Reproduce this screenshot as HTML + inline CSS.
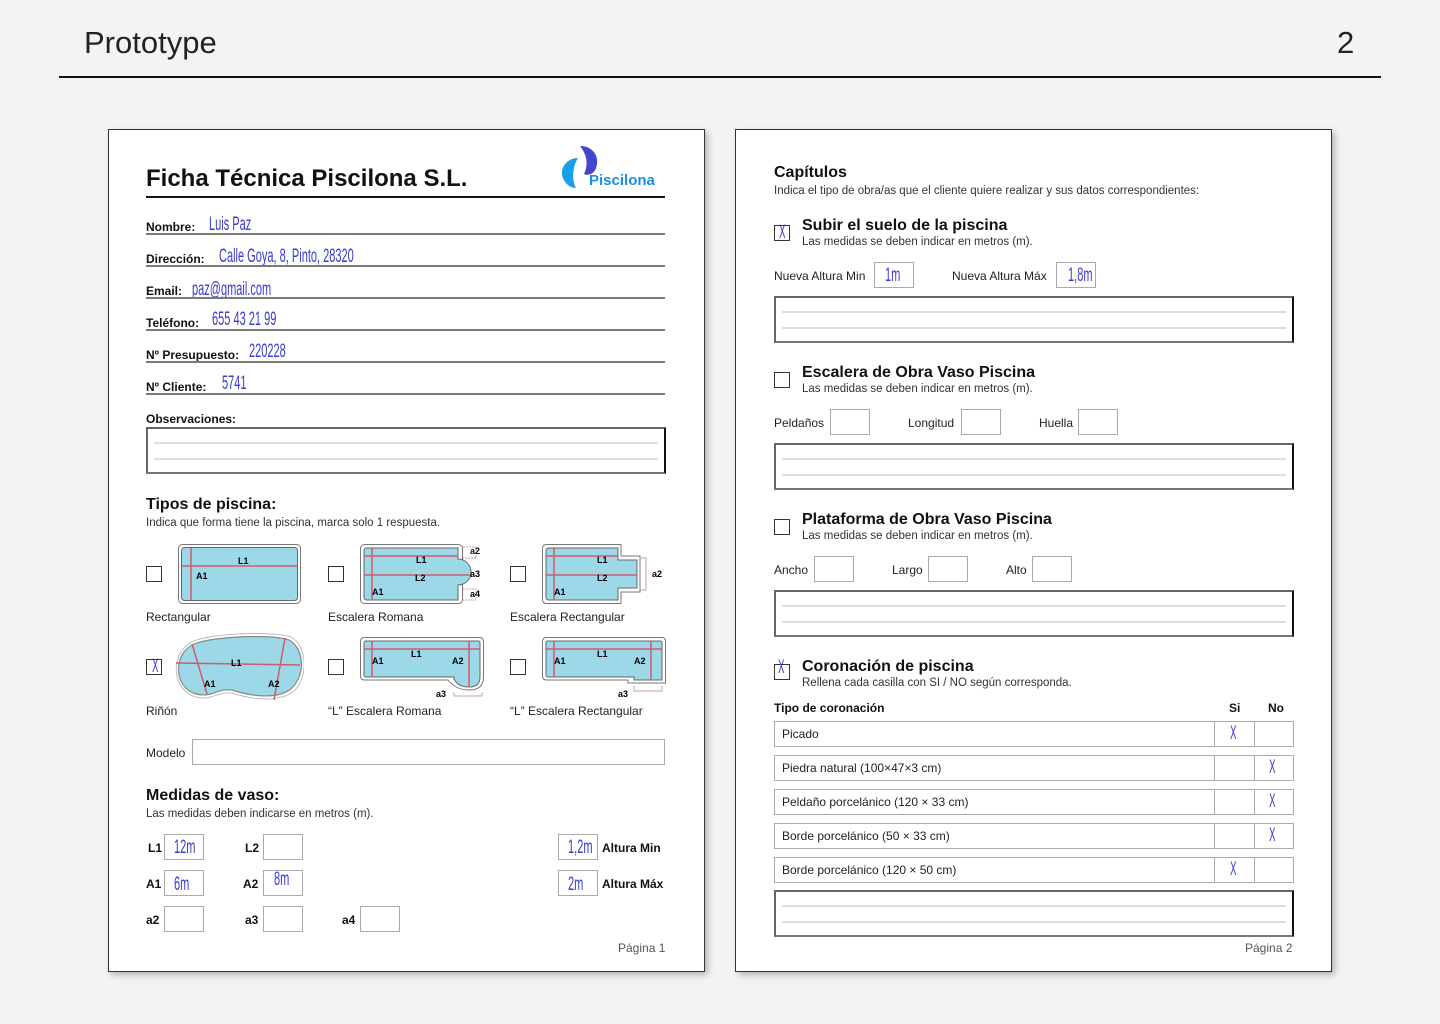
<!DOCTYPE html>
<html><head><meta charset="utf-8"><style>
*{margin:0;padding:0;box-sizing:border-box}
body{width:1440px;height:1024px;background:#f3f3f3;position:relative;font-family:"Liberation Sans",sans-serif;color:#111;overflow:hidden}
.a{position:absolute;white-space:nowrap}
.pg{position:absolute;background:#fff;border:1px solid #333;box-shadow:3px 3px 6px rgba(0,0,0,.25)}
.lb{font-size:12px;font-weight:bold;line-height:14px}
.ln{position:absolute;height:2px;background:#7a7a7a}
.hw{position:absolute;white-space:nowrap;font-family:"Liberation Sans Narrow","Liberation Sans",sans-serif;color:#3b3bd0;font-size:19px;transform:scaleX(.58);transform-origin:left center;line-height:18px}
.box{position:absolute;border:2px solid #666;border-right-color:#111;border-bottom-color:#777}
.box i{position:absolute;left:6px;right:6px;height:2px;background:#ddd}
.f{position:absolute;border:1px solid #aaa;background:#fff}
.cb{position:absolute;width:16px;height:16px;border:1.5px solid #333;background:#fff}
.t16{font-size:16px;font-weight:bold;line-height:20px}
.s11{font-size:11.5px;color:#333;line-height:14px}
.n12{font-size:12px;line-height:14px;color:#222}
.x{position:absolute;color:#3b3bd0;font-family:"Liberation Sans Narrow","Liberation Sans",sans-serif;font-size:19px;line-height:18px;transform:scaleX(.5)}
</style></head><body>
<div class="a" style="left:84px;top:24px;font-size:31px;line-height:38px;color:#222">Prototype</div>
<div class="a" style="left:1337px;top:24px;font-size:31px;line-height:38px;color:#222">2</div>
<div class="a" style="left:59px;top:76px;width:1322px;height:2px;background:#111"></div>

<!-- PAGE 1 -->
<div class="pg" style="left:108px;top:129px;width:597px;height:843px"></div>
<div class="a" style="left:146px;top:165px;font-size:24px;font-weight:bold;line-height:28px">Ficha Técnica Piscilona S.L.</div>
<div class="a" style="left:146px;top:196px;width:519px;height:2px;background:#111"></div>
<svg class="a" style="left:558px;top:144px" width="110" height="46" viewBox="0 0 110 46">
<path d="M22 2 C36 2 42 14 38 24 C36 30 30 32 26 30 C30 22 30 12 22 2Z" fill="#4444cc"/>
<path d="M20 14 C8 14 0 26 6 36 C9 42 14 44 18 44 C14 36 14 24 20 14Z" fill="#1aa0e6"/>
<text x="31" y="41" font-family="Liberation Sans" font-weight="bold" font-size="15" fill="#1a8fe0">Piscilona</text>
</svg>

<div class="a lb" style="left:146px;top:220px">Nombre:</div><div class="hw" style="left:209px;top:216px">Luis Paz</div><div class="ln" style="left:146px;top:233px;width:519px"></div>
<div class="a lb" style="left:146px;top:252px">Dirección:</div><div class="hw" style="left:219px;top:248px">Calle Goya, 8, Pinto, 28320</div><div class="ln" style="left:146px;top:265px;width:519px"></div>
<div class="a lb" style="left:146px;top:284px">Email:</div><div class="hw" style="left:192px;top:281px">paz@gmail.com</div><div class="ln" style="left:146px;top:297px;width:519px"></div>
<div class="a lb" style="left:146px;top:316px">Teléfono:</div><div class="hw" style="left:212px;top:311px">655 43 21 99</div><div class="ln" style="left:146px;top:329px;width:519px"></div>
<div class="a lb" style="left:146px;top:348px">Nº Presupuesto:</div><div class="hw" style="left:249px;top:343px">220228</div><div class="ln" style="left:146px;top:361px;width:519px"></div>
<div class="a lb" style="left:146px;top:380px">Nº Cliente:</div><div class="hw" style="left:222px;top:375px">5741</div><div class="ln" style="left:146px;top:393px;width:519px"></div>
<div class="a lb" style="left:146px;top:412px">Observaciones:</div>
<div class="box" style="left:146px;top:427px;width:520px;height:47px"><i style="top:13px"></i><i style="top:29px"></i></div>

<div class="a t16" style="left:146px;top:495px">Tipos de piscina:</div>
<div class="a s11" style="left:146px;top:516px">Indica que forma tiene la piscina, marca solo 1 respuesta.</div>

<div class="cb" style="left:146px;top:566px"></div>
<div class="cb" style="left:328px;top:566px"></div>
<div class="cb" style="left:510px;top:566px"></div>
<div class="cb" style="left:146px;top:659px"></div><div class="x" style="left:149px;top:658px">X</div>
<div class="cb" style="left:328px;top:659px"></div>
<div class="cb" style="left:510px;top:659px"></div>

<svg class="a" style="left:176px;top:542px" width="130" height="64" font-family="Liberation Sans" font-weight="bold" font-size="9">
<rect x="2.5" y="2.5" width="122" height="59" rx="4" fill="#fff" stroke="#777"/>
<rect x="5.5" y="5.5" width="116" height="53" rx="3" fill="#9dd8e8" stroke="#666"/>
<line x1="5" y1="24" x2="122" y2="24" stroke="#d05a6a" stroke-width="1.5"/><line x1="15" y1="6" x2="15" y2="58" stroke="#d05a6a" stroke-width="1.5"/>
<text x="62" y="22">L1</text><text x="20" y="37">A1</text></svg>

<svg class="a" style="left:358px;top:542px" width="130" height="64" font-family="Liberation Sans" font-weight="bold" font-size="9">
<rect x="2.5" y="2.5" width="102" height="59" rx="4" fill="#fff" stroke="#777"/>
<path d="M6 9 Q6 6 9 6 H100 V17 A13 13 0 0 1 100 43 V58 H9 Q6 58 6 55Z" fill="#9dd8e8" stroke="#666"/>
<line x1="6" y1="14" x2="100" y2="14" stroke="#d05a6a" stroke-width="1.5"/><line x1="6" y1="33" x2="112" y2="33" stroke="#d05a6a" stroke-width="1.5"/><line x1="14" y1="6" x2="14" y2="58" stroke="#d05a6a" stroke-width="1.5"/>
<path d="M105 5 H118 V16 H105 M105 47 H118 V58 H105" fill="none" stroke="#c9a0a8" stroke-dasharray="2 1"/>
<text x="58" y="21">L1</text><text x="57" y="39">L2</text><text x="14" y="53">A1</text>
<text x="112" y="12" fill="#111">a2</text><text x="112" y="35">a3</text><text x="112" y="55">a4</text></svg>

<svg class="a" style="left:540px;top:542px" width="130" height="64" font-family="Liberation Sans" font-weight="bold" font-size="9">
<path d="M2.5 6.5 Q2.5 2.5 6.5 2.5 H81 V14 H100 V50 H81 V61.5 H6.5 Q2.5 61.5 2.5 57.5Z" fill="#fff" stroke="#777"/>
<path d="M6 9 Q6 6 9 6 H78 V18 H97 V46 H78 V58 H9 Q6 58 6 55Z" fill="#9dd8e8" stroke="#666"/>
<line x1="6" y1="14" x2="78" y2="14" stroke="#d05a6a" stroke-width="1.5"/><line x1="6" y1="33" x2="97" y2="33" stroke="#d05a6a" stroke-width="1.5"/><line x1="14" y1="6" x2="14" y2="58" stroke="#d05a6a" stroke-width="1.5"/>
<path d="M100 16 H106 V48 H100" fill="none" stroke="#c9a0a8"/>
<text x="57" y="21">L1</text><text x="57" y="39">L2</text><text x="14" y="53">A1</text><text x="112" y="35">a2</text></svg>

<svg class="a" style="left:174px;top:632px" width="130" height="72" font-family="Liberation Sans" font-weight="bold" font-size="9">
<path d="M20 12 C40 4 100 2 115 8 C130 16 132 42 118 56 C102 70 70 62 58 58 C44 56 38 66 22 62 C0 56 -2 22 20 12Z" fill="#9dd8e8" stroke="#888" stroke-width="1.2"/>
<path d="M20 9 C40 1 100 -1 117 5 C133 14 135 44 120 59 C102 73 70 65 58 61 C44 59 38 69 22 65 C-3 58 -5 20 20 9Z" fill="none" stroke="#bbb"/>
<line x1="2" y1="31" x2="126" y2="33" stroke="#d05a6a" stroke-width="1.5"/><line x1="18" y1="12" x2="33" y2="62" stroke="#d05a6a" stroke-width="1.5"/><line x1="111" y1="6" x2="100" y2="68" stroke="#d05a6a" stroke-width="1.5"/>
<text x="57" y="34">L1</text><text x="30" y="55">A1</text><text x="94" y="55">A2</text></svg>

<svg class="a" style="left:358px;top:635px" width="130" height="66" font-family="Liberation Sans" font-weight="bold" font-size="9">
<path d="M2.5 6.5 Q2.5 2.5 6.5 2.5 H122 Q125.5 2.5 125.5 6.5 V42 Q125.5 55 111 55 Q98 55 90 45 H6.5 Q2.5 45 2.5 41Z" fill="#fff" stroke="#777"/>
<path d="M6 8 Q6 6 8 6 H120 Q122 6 122 8 V42 Q122 52 111 52 Q100 52 96 44 V42 H8 Q6 42 6 40Z" fill="#9dd8e8" stroke="#666"/>
<line x1="6" y1="14" x2="122" y2="14" stroke="#d05a6a" stroke-width="1.5"/><line x1="14" y1="6" x2="14" y2="42" stroke="#d05a6a" stroke-width="1.5"/><line x1="111" y1="6" x2="111" y2="52" stroke="#d05a6a" stroke-width="1.5"/>
<path d="M96 57 V61 H124 V57" fill="none" stroke="#c9a0a8"/>
<text x="53" y="22">L1</text><text x="14" y="29">A1</text><text x="94" y="29">A2</text><text x="78" y="62">a3</text></svg>

<svg class="a" style="left:540px;top:635px" width="130" height="66" font-family="Liberation Sans" font-weight="bold" font-size="9">
<path d="M2.5 6.5 Q2.5 2.5 6.5 2.5 H122 Q125.5 2.5 125.5 6.5 V48 H88 V45 H6.5 Q2.5 45 2.5 41Z" fill="#fff" stroke="#777"/>
<path d="M6 8 Q6 6 8 6 H120 Q122 6 122 8 V45 H94 V42 H8 Q6 42 6 40Z" fill="#9dd8e8" stroke="#666"/>
<line x1="6" y1="14" x2="122" y2="14" stroke="#d05a6a" stroke-width="1.5"/><line x1="14" y1="6" x2="14" y2="42" stroke="#d05a6a" stroke-width="1.5"/><line x1="111" y1="6" x2="111" y2="45" stroke="#d05a6a" stroke-width="1.5"/>
<path d="M94 51 V56 H122 V51" fill="none" stroke="#c9a0a8"/>
<text x="57" y="22">L1</text><text x="14" y="29">A1</text><text x="94" y="29">A2</text><text x="78" y="62">a3</text></svg>

<div class="a n12" style="left:146px;top:610px">Rectangular</div>
<div class="a n12" style="left:328px;top:610px">Escalera Romana</div>
<div class="a n12" style="left:510px;top:610px">Escalera Rectangular</div>
<div class="a n12" style="left:146px;top:704px">Riñón</div>
<div class="a n12" style="left:328px;top:704px">“L” Escalera Romana</div>
<div class="a n12" style="left:510px;top:704px">“L”  Escalera Rectangular</div>

<div class="a n12" style="left:146px;top:746px">Modelo</div>
<div class="f" style="left:192px;top:739px;width:473px;height:26px"></div>

<div class="a t16" style="left:146px;top:786px">Medidas de vaso:</div>
<div class="a s11" style="left:146px;top:807px">Las medidas deben indicarse en metros (m).</div>

<div class="a lb" style="left:148px;top:841px">L1</div><div class="f" style="left:164px;top:834px;width:40px;height:26px"></div><div class="hw" style="left:174px;top:839px">12m</div>
<div class="a lb" style="left:245px;top:841px">L2</div><div class="f" style="left:263px;top:834px;width:40px;height:26px"></div>
<div class="a lb" style="left:146px;top:877px">A1</div><div class="f" style="left:164px;top:870px;width:40px;height:26px"></div><div class="hw" style="left:174px;top:876px">6m</div>
<div class="a lb" style="left:243px;top:877px">A2</div><div class="f" style="left:263px;top:870px;width:40px;height:26px"></div><div class="hw" style="left:274px;top:871px">8m</div>
<div class="a lb" style="left:146px;top:913px">a2</div><div class="f" style="left:164px;top:906px;width:40px;height:26px"></div>
<div class="a lb" style="left:245px;top:913px">a3</div><div class="f" style="left:263px;top:906px;width:40px;height:26px"></div>
<div class="a lb" style="left:342px;top:913px">a4</div><div class="f" style="left:360px;top:906px;width:40px;height:26px"></div>
<div class="f" style="left:558px;top:834px;width:40px;height:26px"></div><div class="hw" style="left:568px;top:839px">1,2m</div><div class="a lb" style="left:602px;top:841px">Altura Min</div>
<div class="f" style="left:558px;top:870px;width:40px;height:26px"></div><div class="hw" style="left:568px;top:876px">2m</div><div class="a lb" style="left:602px;top:877px">Altura Máx</div>
<div class="a n12" style="left:618px;top:941px;color:#555">Página 1</div>

<!-- PAGE 2 -->
<div class="pg" style="left:735px;top:129px;width:597px;height:843px"></div>
<div class="a t16" style="left:774px;top:163px">Capítulos</div>
<div class="a s11" style="left:774px;top:184px">Indica el tipo de obra/as que el cliente quiere realizar y sus datos correspondientes:</div>

<div class="cb" style="left:774px;top:225px"></div><div class="x" style="left:776px;top:224px">X</div>
<div class="a t16" style="left:802px;top:216px">Subir el suelo de la piscina</div>
<div class="a s11" style="left:802px;top:235px">Las medidas se deben indicar en metros (m).</div>
<div class="a n12" style="left:774px;top:269px">Nueva Altura Min</div><div class="f" style="left:874px;top:262px;width:40px;height:26px"></div><div class="hw" style="left:885px;top:267px">1m</div>
<div class="a n12" style="left:952px;top:269px">Nueva Altura Máx</div><div class="f" style="left:1056px;top:262px;width:40px;height:26px"></div><div class="hw" style="left:1068px;top:267px">1,8m</div>
<div class="box" style="left:774px;top:296px;width:520px;height:47px"><i style="top:13px"></i><i style="top:29px"></i></div>

<div class="cb" style="left:774px;top:372px"></div>
<div class="a t16" style="left:802px;top:363px">Escalera de Obra Vaso Piscina</div>
<div class="a s11" style="left:802px;top:382px">Las medidas se deben indicar en metros (m).</div>
<div class="a n12" style="left:774px;top:416px">Peldaños</div><div class="f" style="left:830px;top:409px;width:40px;height:26px"></div>
<div class="a n12" style="left:908px;top:416px">Longitud</div><div class="f" style="left:961px;top:409px;width:40px;height:26px"></div>
<div class="a n12" style="left:1039px;top:416px">Huella</div><div class="f" style="left:1078px;top:409px;width:40px;height:26px"></div>
<div class="box" style="left:774px;top:443px;width:520px;height:47px"><i style="top:13px"></i><i style="top:29px"></i></div>

<div class="cb" style="left:774px;top:519px"></div>
<div class="a t16" style="left:802px;top:510px">Plataforma de Obra Vaso Piscina</div>
<div class="a s11" style="left:802px;top:529px">Las medidas se deben indicar en metros (m).</div>
<div class="a n12" style="left:774px;top:563px">Ancho</div><div class="f" style="left:814px;top:556px;width:40px;height:26px"></div>
<div class="a n12" style="left:892px;top:563px">Largo</div><div class="f" style="left:928px;top:556px;width:40px;height:26px"></div>
<div class="a n12" style="left:1006px;top:563px">Alto</div><div class="f" style="left:1032px;top:556px;width:40px;height:26px"></div>
<div class="box" style="left:774px;top:590px;width:520px;height:47px"><i style="top:13px"></i><i style="top:29px"></i></div>

<div class="cb" style="left:774px;top:664px"></div><div class="x" style="left:775px;top:659px">X</div>
<div class="a t16" style="left:802px;top:657px">Coronación de piscina</div>
<div class="a s11" style="left:802px;top:676px">Rellena cada casilla con SI / NO según corresponda.</div>
<div class="a lb" style="left:774px;top:701px">Tipo de coronación</div>
<div class="a lb" style="left:1229px;top:701px">Si</div><div class="a lb" style="left:1268px;top:701px">No</div>

<div class="f" style="left:774px;top:721px;width:520px;height:26px"></div><div class="a" style="left:1214px;top:721px;width:1px;height:26px;background:#aaa"></div><div class="a" style="left:1254px;top:721px;width:1px;height:26px;background:#aaa"></div>
<div class="a n12" style="left:782px;top:727px">Picado</div><div class="x" style="left:1227px;top:725px">X</div>
<div class="f" style="left:774px;top:755px;width:520px;height:26px"></div><div class="a" style="left:1214px;top:755px;width:1px;height:26px;background:#aaa"></div><div class="a" style="left:1254px;top:755px;width:1px;height:26px;background:#aaa"></div>
<div class="a n12" style="left:782px;top:761px">Piedra natural (100×47×3 cm)</div><div class="x" style="left:1266px;top:759px">X</div>
<div class="f" style="left:774px;top:789px;width:520px;height:26px"></div><div class="a" style="left:1214px;top:789px;width:1px;height:26px;background:#aaa"></div><div class="a" style="left:1254px;top:789px;width:1px;height:26px;background:#aaa"></div>
<div class="a n12" style="left:782px;top:795px">Peldaño porcelánico (120 × 33 cm)</div><div class="x" style="left:1266px;top:793px">X</div>
<div class="f" style="left:774px;top:823px;width:520px;height:26px"></div><div class="a" style="left:1214px;top:823px;width:1px;height:26px;background:#aaa"></div><div class="a" style="left:1254px;top:823px;width:1px;height:26px;background:#aaa"></div>
<div class="a n12" style="left:782px;top:829px">Borde porcelánico (50 × 33 cm)</div><div class="x" style="left:1266px;top:827px">X</div>
<div class="f" style="left:774px;top:857px;width:520px;height:26px"></div><div class="a" style="left:1214px;top:857px;width:1px;height:26px;background:#aaa"></div><div class="a" style="left:1254px;top:857px;width:1px;height:26px;background:#aaa"></div>
<div class="a n12" style="left:782px;top:863px">Borde porcelánico (120 × 50 cm)</div><div class="x" style="left:1227px;top:861px">X</div>
<div class="box" style="left:774px;top:890px;width:520px;height:47px"><i style="top:13px"></i><i style="top:29px"></i></div>
<div class="a n12" style="left:1245px;top:941px;color:#555">Página 2</div>
</body></html>
